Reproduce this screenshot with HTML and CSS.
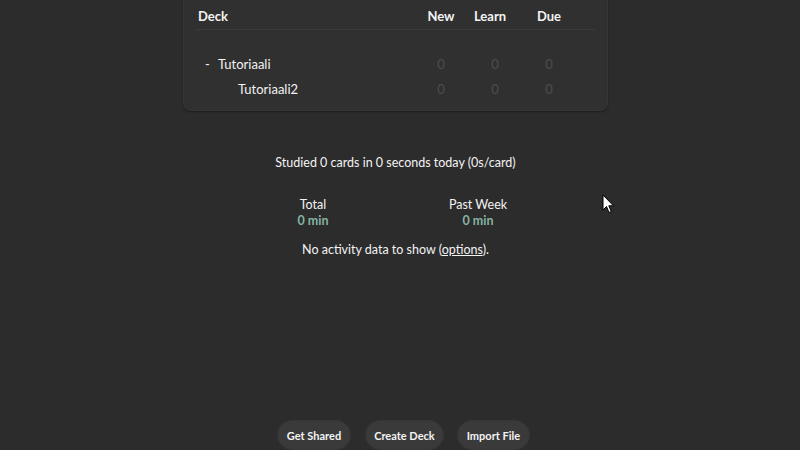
FILE: index.html
```html
<!DOCTYPE html>
<html>
<head>
<meta charset="utf-8">
<link rel="stylesheet" href="styles.css">
</head>
<body>
<div class="page">
  <div class="card">
    <table class="decks">
      <tr class="head">
        <th class="deck">Deck</th>
        <th class="num">New</th>
        <th class="num learn">Learn</th>
        <th class="num">Due</th>
        <th class="opts"></th>
      </tr>
      <tr class="spacer"><td colspan="5"></td></tr>
      <tr class="row">
        <td class="deck"><span class="collapse">-</span>Tutoriaali</td>
        <td class="num zero">0</td>
        <td class="num zero">0</td>
        <td class="num zero">0</td>
        <td class="opts"></td>
      </tr>
      <tr class="row">
        <td class="deck sub">Tutoriaali2</td>
        <td class="num zero">0</td>
        <td class="num zero">0</td>
        <td class="num zero">0</td>
        <td class="opts"></td>
      </tr>
    </table>
  </div>
  <div class="stats">
    <div class="studied">Studied 0 cards in 0 seconds today (0s/card)</div>
    <div class="totals">
      <div class="tot"><div class="lbl">Total</div><div class="min">0 min</div></div>
      <div class="tot"><div class="lbl">Past Week</div><div class="min">0 min</div></div>
    </div>
    <div class="noact">No activity data to show (<a href="#">options</a>).</div>
  </div>
</div>
<div class="bottom">
  <button class="b1">Get Shared</button>
  <button class="b2">Create Deck</button>
  <button class="b3">Import File</button>
</div>
<svg class="cursor" width="14" height="20" viewBox="0 0 14 20"><path d="M1 1 L1 16 L4.5 12.5 L7 18.5 L9.3 17.5 L6.8 11.8 L11.5 11.8 Z" fill="#fff" stroke="#000" stroke-width="1"/></svg>
</body>
</html>
```
FILE: styles.css
```css
html, body {
  margin: 0;
  padding: 0;
  background: #2c2c2c;
  height: 450px;
  overflow: hidden;
  font-family: "Lato", "Noto Sans", sans-serif;
  font-size: 13px;
  color: #f3f3f3;
}
.page {
  display: flex;
  flex-direction: column;
  align-items: flex-start;
  padding-left: 183px;
}
.card {
  width: 425px;
  box-sizing: border-box;
  margin-top: -10px;
  background: #303030;
  border: 1px solid #363636;
  border-radius: 8px;
  box-shadow: 0 1px 2px rgba(0,0,0,0.35);
  padding: 12px 12px 9px 12px;
}
.decks {
  width: 100%;
  border-collapse: collapse;
  table-layout: fixed;
}
.decks th {
  font-weight: bold;
  height: 26px;
  padding: 0;
  border-bottom: 1px solid #3a3a3a;
  vertical-align: middle;
}
.decks th.deck { text-align: left; padding-left: 2px; }
.decks .num { width: 54px; text-align: center; }
.decks th.learn { width: 44px; padding-right: 10px; }
.decks .opts { width: 19px; }
.decks tr.spacer td { height: 21px; padding: 0; }
.decks tr.row td { height: 25px; padding: 0; vertical-align: middle; }
.decks tr.row td.deck { padding-left: 9px; }
.collapse { display: inline-block; width: 13px; }
.decks tr.row td.sub { padding-left: 42px; }
.zero { color: #4e4e4e; }
.stats {
  margin-top: 43px;
  width: 425px;
  display: flex;
  flex-direction: column;
  align-items: center;
  font-size: 12.5px;
}
.studied { line-height: 18px; }
.totals {
  display: flex;
  margin-top: 25px;
  width: 265px;
  justify-content: space-between;
}
.tot {
  width: 100px;
  text-align: center;
}
.lbl, .min { line-height: 16px; height: 16px; }
.min { color: #86b3a3; font-weight: bold; }
.noact { margin-top: 12px; line-height: 18px; }
.noact a { color: #f3f3f3; }
.bottom {
  position: absolute;
  left: 0; right: 0; top: 420px;
  display: flex;
  justify-content: center;
  padding-left: 7px;
}
.b2 { margin: 0 13px 0 14px; }
button {
  font-family: inherit;
  font-size: 11px;
  font-weight: bold;
  color: #f3f3f3;
  background: #3a3a3a;
  border: 1px solid #363636;
  border-radius: 15px;
  height: 30px;
  padding: 0 8.5px;
}
.cursor {
  position: absolute;
  left: 602px;
  top: 194px;
}
```
